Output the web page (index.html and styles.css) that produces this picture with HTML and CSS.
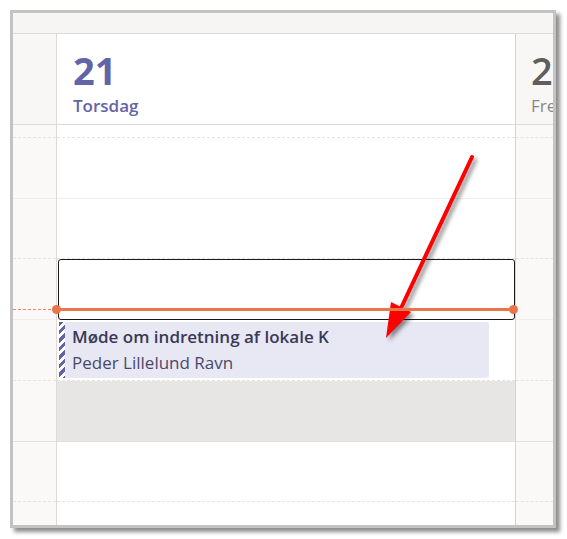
FILE: index.html
```html
<!DOCTYPE html>
<html lang="da">
<head>
<meta charset="utf-8">
<title>Kalender</title>
<link rel="stylesheet" href="styles.css">
</head>
<body>
<div class="frame">
  <div class="topbar"></div>
  <div class="cols">
    <div class="col gutter">
      <div class="head"></div>
      <div class="body">
        <div class="slot s0"></div>
        <div class="slot s1"></div>
        <div class="slot s2"></div>
        <div class="slot s3"></div>
        <div class="slot s4"></div>
        <div class="slot s5"></div>
        <div class="slot s6"></div>
        <div class="slot s7"></div>
        <div class="now-dash"></div>
      </div>
    </div>
    <div class="col day">
      <div class="head">
        <div class="num">21</div>
        <div class="wday">Torsdag</div>
      </div>
      <div class="body">
        <div class="slot s0"></div>
        <div class="slot s1"></div>
        <div class="slot s2"></div>
        <div class="slot s3"></div>
        <div class="slot s4"></div>
        <div class="slot s5 blocked"></div>
        <div class="slot s6"></div>
        <div class="slot s7"></div>
        <div class="selection"></div>
        <div class="now-line"><span class="dot left"></span><span class="dot right"></span></div>
        <div class="event">
          <div class="ev-title">Møde om indretning af lokale K</div>
          <div class="ev-org">Peder Lillelund Ravn</div>
        </div>
      </div>
    </div>
    <div class="col next">
      <div class="head">
        <div class="num">22</div>
        <div class="wday">Fredag</div>
      </div>
      <div class="body">
        <div class="slot s0"></div>
        <div class="slot s1"></div>
        <div class="slot s2"></div>
        <div class="slot s3"></div>
        <div class="slot s4"></div>
        <div class="slot s5"></div>
        <div class="slot s6"></div>
        <div class="slot s7"></div>
      </div>
    </div>
  </div>
</div>
<svg class="arrow" width="567" height="539" viewBox="0 0 567 539" xmlns="http://www.w3.org/2000/svg">
  <line x1="472" y1="157" x2="402" y2="306" stroke="#ff0000" stroke-width="4" stroke-linecap="round"/>
  <polygon points="391,302 411,312 386,338" fill="#ff0000"/>
</svg>
</body>
</html>
```

FILE: styles.css
```css
html, body {
  margin: 0;
  padding: 0;
}
body {
  position: relative;
  width: 567px;
  height: 539px;
  background: #ffffff;
  font-family: "Open Sans", "Noto Sans", sans-serif;
  overflow: hidden;
}
.frame {
  position: relative;
  margin: 10px 0 0 10px;
  width: 540px;
  height: 512px;
  border: 3px solid #c3c3c3;
  box-shadow: 4px 4px 4px rgba(0, 0, 0, 0.45);
  background: #ffffff;
  display: flex;
  flex-direction: column;
  overflow: hidden;
}
.topbar {
  height: 20px;
  flex: none;
  background: #f6f5f4;
  border-bottom: 1px solid #dddbd9;
}
.cols {
  flex: 1;
  display: flex;
  min-height: 0;
}
.col {
  display: flex;
  flex-direction: column;
  overflow: hidden;
}
.gutter {
  width: 43px;
  border-right: 1px solid #dcdad8;
  background: #faf9f8;
}
.day {
  width: 458px;
  border-right: 1px solid #d5d3d1;
  background: #ffffff;
  overflow: visible;
}
.next {
  width: 37px;
  background: #faf9f8;
}
.head {
  flex: none;
  border-bottom: 1px solid #dddbd9;
  box-sizing: border-box;
  height: 91px;
}
.gutter .head {
  background: #f8f7f6;
}
.day .head {
  padding: 14px 0 0 16px;
}
.next .head {
  padding: 14px 0 0 15px;
  background: #f8f7f6;
  white-space: nowrap;
}
.num {
  font-size: 38px;
  font-weight: 700;
  line-height: 44px;
  color: #6264a7;
}
.wday {
  font-size: 17px;
  font-weight: 600;
  line-height: 24px;
  margin-top: 2px;
  color: #6264a7;
}
.next .num {
  font-weight: 600;
  color: #605e5c;
}
.next .wday {
  font-weight: 400;
  color: #8a8886;
}
.body {
  position: relative;
  flex: 1;
}
.slot {
  box-sizing: border-box;
}
.s0 { height: 13px; border-bottom: 1px dashed #e6e4e2; }
.s1 { height: 61px; border-bottom: 1px solid #f0eeec; }
.s2 { height: 60px; border-bottom: 1px dashed #e6e4e2; }
.s3 { height: 61px; border-bottom: 1px solid #f0eeec; }
.s4 { height: 61px; border-bottom: 1px dashed #e6e4e2; }
.s5 { height: 61px; border-bottom: 1px solid #e3e1df; }
.s6 { height: 60px; border-bottom: 1px dashed #e6e4e2; }
.s7 { height: 30px; }
.blocked {
  background: #e8e6e4;
}
.now-dash {
  position: absolute;
  left: 0;
  right: 0;
  top: 184px;
  border-top: 1px dashed #ee8a63;
}
.selection {
  position: absolute;
  left: 1px;
  top: 134px;
  width: 457px;
  height: 61px;
  box-sizing: border-box;
  border: 1px solid #1b1a19;
  border-radius: 3px;
}
.now-line {
  position: absolute;
  left: -1px;
  top: 183px;
  width: 458px;
  height: 3px;
  background: #e97548;
  z-index: 2;
}
.dot {
  position: absolute;
  top: -3px;
  width: 9px;
  height: 9px;
  border-radius: 50%;
  background: #e97548;
}
.dot.left { left: -4px; }
.dot.right { right: -4px; }
.event {
  position: absolute;
  left: 2px;
  top: 197px;
  width: 430px;
  height: 56px;
  box-sizing: border-box;
  padding: 3px 0 0 13px;
  border-radius: 0 3px 3px 0;
  background-image: repeating-linear-gradient(135deg, #6264a7 0 3px, #ffffff 3px 6px);
  background-size: 6px 100%;
  background-repeat: no-repeat;
  background-color: #e8e8f5;
}
.ev-title {
  font-size: 17px;
  font-weight: 600;
  line-height: 24px;
  color: #3a3955;
  white-space: nowrap;
}
.ev-org {
  font-size: 17px;
  font-weight: 400;
  line-height: 27px;
  color: #4a4868;
  white-space: nowrap;
}
.arrow {
  position: absolute;
  left: 0;
  top: 0;
  pointer-events: none;
  filter: drop-shadow(3px 3px 2px rgba(0, 0, 0, 0.45));
}
```
